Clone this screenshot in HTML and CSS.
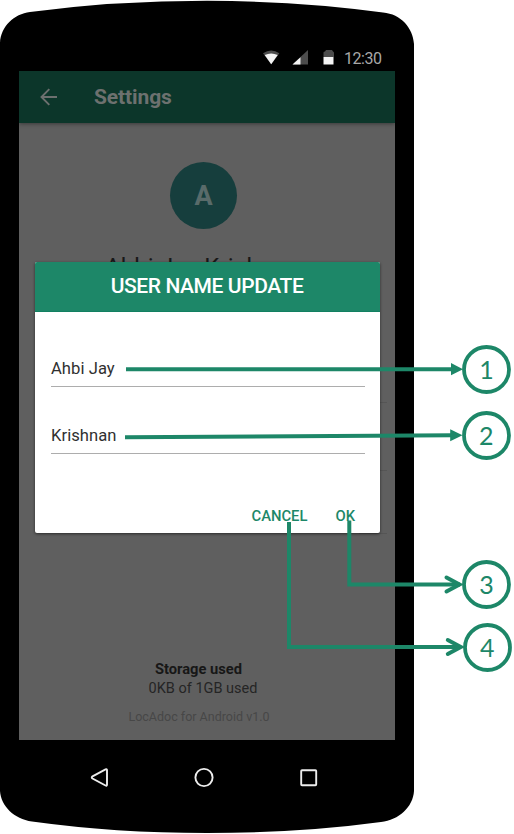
FILE: index.html
```html
<!DOCTYPE html>
<html lang="en">
<head>
<meta charset="utf-8">
<title>User name update</title>
<link rel="stylesheet" href="styles.css">
</head>
<body>
<main class="figure">
  <div class="phone">
    <svg class="phone-shell" viewBox="0 0 414 834" aria-hidden="true">
      <path d="M0 43C1 26 14 14 30 12Q115 .8 207 .8Q300 1 383 12.5C401 14 413 28 414 44V791C413 807 399 820 381 822Q300 833 207 833Q115 833 32 821.500C14 819 1 806 0 791Z"/>
    </svg>
    <div class="status-bar">
      <svg class="status-icons" viewBox="0 0 74 16" aria-hidden="true">
        <path class="dim" d="M0 3.300Q8.200-2.500 16.400 3.300L8.200 14.300Z"/>
        <path class="lit" d="M1.700 5.100Q8.200 1.800 14.700 5.100L8.200 14.300Z"/>
        <path class="dim" d="M29.500 14.600L45 0V14.600Z"/>
        <path class="lit" d="M29.500 14.600L37.500 7.200V14.600Z"/>
        <path class="dim" d="M60.500 7V2.500Q60.500 1.500 62 1.500L63 0H69L70 1.500Q71 1.500 71 3V7Z"/>
        <path class="lit" d="M60.500 7H70.500V14.500H60.500Z"/>
      </svg>
      <span class="clock">12:30</span>
    </div>
    <div class="screen">
      <header class="app-bar">
        <svg class="back" viewBox="0 0 18 18" aria-hidden="true"><path d="M17 9H2M9.300 1.200L1.500 9L9.300 16.800"/></svg>
        <h1>Settings</h1>
      </header>
      <section class="profile">
        <div class="avatar">A</div>
        <div class="profile-name">Ahbi Jay Krishnan</div>
      </section>
      <div class="rows"><i></i><i></i><i></i></div>
      <footer class="storage">
        <strong>Storage used</strong>
        <span class="usage">0KB of 1GB used</span>
        <span class="version">LocAdoc for Android v1.0</span>
      </footer>
      <section class="dialog">
        <h2>USER NAME UPDATE</h2>
        <div class="fields">
          <div class="field"><span class="first">Ahbi Jay</span></div>
          <div class="field"><span class="last">Krishnan</span></div>
        </div>
        <div class="actions"><span class="cancel">CANCEL</span><span class="ok">OK</span></div>
      </section>
    </div>
    <svg class="nav-bar" viewBox="0 0 414 94" aria-hidden="true">
      <path d="M92.500 36.300L105.500 29.300Q107 28.700 107 30.300V44.700Q107 46.200 105.500 45.500L92.500 38.500Q91 37.400 92.500 36.300Z"/>
      <circle cx="204" cy="37.500" r="8.600"/>
      <rect x="301.200" y="30.200" width="15" height="15" rx=".8"/>
    </svg>
  </div>
  <svg class="callouts" viewBox="0 0 514 834">
    <g class="leader">
      <path d="M126 369.200H453"/>
      <path d="M125 437.200L453 435.200"/>
      <path d="M349.300 520.500V584.500H460"/>
      <path d="M289 522V647H461"/>
    </g>
    <g class="tip">
      <path d="M451 363L463 369.200L451 375.300Z"/>
      <path d="M450.200 429.200L462.500 435.200L450.200 441.200Z"/>
    </g>
    <g class="open-tip">
      <path d="M446.500 577.500L459.500 584.500L446.500 591.500"/>
      <path d="M447.800 640L460.800 647L447.800 654"/>
    </g>
    <g class="ring">
      <circle cx="486.500" cy="369.500" r="22.500"/>
      <circle cx="486.500" cy="435.500" r="22.500"/>
      <circle cx="486.500" cy="584.500" r="22.500"/>
      <circle cx="487.500" cy="647.500" r="22.500"/>
    </g>
    <g class="number">
      <text x="486.500" y="379">1</text>
      <text x="486.200" y="445">2</text>
      <text x="486.500" y="594">3</text>
      <text x="487.200" y="657">4</text>
    </g>
  </svg>
</main>
</body>
</html>
```

FILE: styles.css
```css
* { box-sizing: border-box; }
body { margin: 0; background: #fff; font-family: Roboto, sans-serif; }
h1, h2 { margin: 0; }

.figure { position: relative; width: 514px; height: 834px; overflow: hidden; }
.phone { position: relative; isolation: isolate; width: 414px; height: 834px; display: flex; flex-direction: column; }
.phone-shell { position: absolute; inset: 0; z-index: -1; width: 414px; height: 834px; fill: #000; }

.status-bar { height: 71px; padding: 50px 32px 0 0; display: flex; justify-content: flex-end; align-items: flex-start; }
.status-icons { width: 74px; height: 16px; margin-right: 7px; flex: none; }
.dim { fill: #4c4c4c; }
.lit { fill: #f4f4f4; }
.clock { width: 38px; color: #a8a8a8; font-size: 16px; line-height: 17px; letter-spacing: -.45px; white-space: nowrap; }

.screen { position: relative; width: 376px; height: 669px; margin-left: 19px; background: #5f5f5f; display: flex; flex-direction: column; overflow: hidden; }
.app-bar { height: 52px; flex: none; padding-left: 21px; display: flex; align-items: center; background: #0c362a; box-shadow: 0 1px 4px rgba(0, 0, 0, .4); }
.back { width: 18px; height: 18px; fill: none; stroke: #6d706f; stroke-width: 1.9; }
.app-bar h1 { margin-left: 36px; color: #6d716f; font-size: 21px; line-height: 26px; font-weight: 700; letter-spacing: -.1px; }

.profile { height: 189px; padding: 39px 0 0; display: flex; flex-direction: column; align-items: center; margin-right: 7px; }
.avatar { width: 67px; height: 67px; border-radius: 50%; background: #163e3d; color: #596b6a; display: flex; align-items: center; justify-content: center; font-size: 27px; font-weight: 700; }
.profile-name { margin: 24px 2px 0 0; font-size: 24px; line-height: 28px; color: #181818; letter-spacing: .2px; white-space: nowrap; }

.rows { display: flex; flex-direction: column; height: 222px; padding: 90px 8px 0 340px; gap: 67px; }
.rows i { display: block; height: 1px; flex: none; background: #555; }
.rows i:last-child { margin-top: -5px; }

.storage { padding-top: 125px; height: 206px; display: flex; flex-direction: column; align-items: center; margin-right: 16px; white-space: nowrap; color: #171717; }
.storage strong { line-height: 20px; font-size: 14.700px; margin-left: -1px; }
.usage { line-height: 20px; font-size: 14.500px; color: #252525; margin-left: 8px; }
.version { margin-top: 9px; line-height: 18px; font-size: 12.500px; color: #474747; }

.dialog { position: absolute; left: 15.500px; top: 190.500px; width: 345px; height: 271.500px; background: #fff; border-radius: 2px; box-shadow: 0 1px 3px rgba(0, 0, 0, .55); overflow: hidden; display: flex; flex-direction: column; }
.dialog h2 { height: 50px; flex: none; display: flex; align-items: center; justify-content: center; background: #1d8768; color: #fff; font-size: 21px; font-weight: 500; letter-spacing: -.4px; border-bottom: 1px solid #128061; }
.fields { padding: 8px 15px 0 16.500px; }
.field { height: 67px; display: flex; align-items: flex-end; border-bottom: 1.500px solid #adadad; color: #303030; font-size: 16.600px; line-height: 19px; letter-spacing: .05px; padding-bottom: 8px; }
.actions { display: flex; justify-content: flex-end; gap: 28px; padding: 52.500px 24.500px 0 0; color: #1d8768; font-size: 14.800px; font-weight: 500; line-height: 20px; }

.nav-bar { width: 414px; height: 94px; fill: none; stroke: #ededed; stroke-width: 1.900; }

.callouts { position: absolute; inset: 0; width: 514px; height: 834px; }
.leader path { fill: none; stroke: #1d8768; stroke-width: 4; }
.tip path { fill: #1d8768; }
.open-tip path { fill: none; stroke: #1d8768; stroke-width: 4; stroke-linecap: round; }
.ring circle { fill: #fff; stroke: #1d8768; stroke-width: 3.800; }
.number text { fill: #1d8768; font-family: Lato, sans-serif; font-size: 25px; text-anchor: middle; }
```
